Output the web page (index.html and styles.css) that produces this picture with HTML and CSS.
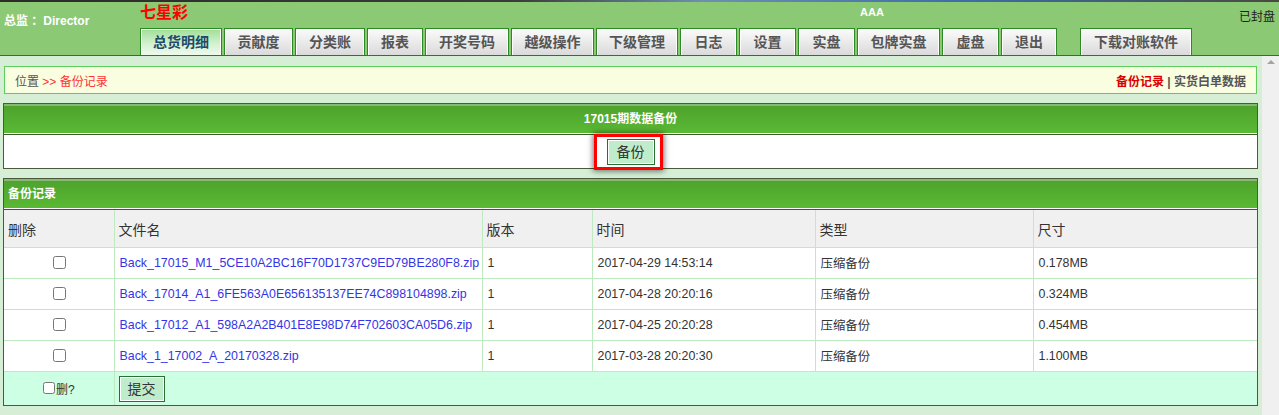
FILE: index.html
```html
<!DOCTYPE html>
<html lang="zh-CN">
<head>
<meta charset="utf-8">
<title>备份记录</title>
<link rel="stylesheet" href="styles.css">
</head>
<body>
<header class="top">
  <div class="strip"></div>
  <div class="top-body">
    <div class="who">总监 ：Director</div>
    <div class="center">
      <div class="title-row">
        <span class="logo">七星彩</span>
        <span class="aaa">AAA</span>
      </div>
      <nav class="tabs">
        <a class="tab active w82">总货明细</a>
        <a class="tab w69">贡献度</a>
        <a class="tab w70">分类账</a>
        <a class="tab w56">报表</a>
        <a class="tab w84">开奖号码</a>
        <a class="tab w83">越级操作</a>
        <a class="tab w82">下级管理</a>
        <a class="tab w57">日志</a>
        <a class="tab w57">设置</a>
        <a class="tab w57">实盘</a>
        <a class="tab w83">包牌实盘</a>
        <a class="tab w57">虚盘</a>
        <a class="tab w56">退出</a>
        <a class="tab w112 dl">下载对账软件</a>
      </nav>
    </div>
    <div class="status">已封盘</div>
  </div>
</header>
<div class="frame">
  <main class="main">
    <div class="crumb">
      <div class="crumb-left">位置 <span class="red">&gt;&gt; 备份记录</span></div>
      <div class="crumb-right"><span class="cur">备份记录</span> | 实货白单数据</div>
    </div>

    <section class="panel">
      <div class="panel-head center-text">17015期数据备份</div>
      <div class="panel-body">
        <span class="btn-wrap">
          <button class="btn">备份</button>
          <span class="mark"></span>
        </span>
      </div>
    </section>

    <section class="panel panel2">
      <div class="panel-head">备份记录</div>
      <table class="grid">
        <colgroup>
          <col style="width:110px"><col style="width:368px"><col style="width:110px"><col style="width:223px"><col style="width:218px"><col>
        </colgroup>
        <thead>
          <tr><th>删除</th><th>文件名</th><th>版本</th><th>时间</th><th>类型</th><th>尺寸</th></tr>
        </thead>
        <tbody>
          <tr><td class="chk"><input type="checkbox"></td><td><a class="file">Back_17015_M1_5CE10A2BC16F70D1737C9ED79BE280F8.zip</a></td><td>1</td><td>2017-04-29 14:53:14</td><td>压缩备份</td><td>0.178MB</td></tr>
          <tr><td class="chk"><input type="checkbox"></td><td><a class="file">Back_17014_A1_6FE563A0E656135137EE74C898104898.zip</a></td><td>1</td><td>2017-04-28 20:20:16</td><td>压缩备份</td><td>0.324MB</td></tr>
          <tr><td class="chk"><input type="checkbox"></td><td><a class="file">Back_17012_A1_598A2A2B401E8E98D74F702603CA05D6.zip</a></td><td>1</td><td>2017-04-25 20:20:28</td><td>压缩备份</td><td>0.454MB</td></tr>
          <tr><td class="chk"><input type="checkbox"></td><td><a class="file">Back_1_17002_A_20170328.zip</a></td><td>1</td><td>2017-03-28 20:20:30</td><td>压缩备份</td><td>1.100MB</td></tr>
        </tbody>
        <tfoot>
          <tr><td class="chk"><label class="del"><input type="checkbox" class="small">删?</label></td><td colspan="5"><button class="btn">提交</button></td></tr>
        </tfoot>
      </table>
    </section>
  </main>
  <div class="scrollbar"><span class="arrow"></span></div>
</div>
</body>
</html>
```
FILE: styles.css
```css
html, body {
  margin: 0;
  padding: 0;
}
body {
  width: 1279px;
  height: 415px;
  overflow: hidden;
  font-family: "Liberation Sans", "Noto Sans CJK SC", sans-serif;
  font-size: 12px;
  color: #333;
  background: #d6eed6;
}

/* ---------- header ---------- */
.top {
  height: 55px;
  background: #8cc974;
  border-bottom: 1px solid #3f6a33;
  display: flex;
  flex-direction: column;
}
.strip {
  height: 2px;
  background: linear-gradient(90deg, #2b2b28 0%, #3a3a36 40%, #6f8fb0 55%, #3d6ea8 75%, #4a4a40 100%);
}
.top-body {
  flex: 1;
  display: flex;
}
.who {
  width: 136px;
  padding: 12px 0 0 4px;
  color: #fff;
  font-weight: bold;
  font-size: 12px;
  line-height: 14px;
}
.center {
  display: flex;
  flex-direction: column;
}
.title-row {
  height: 26px;
  display: flex;
  align-items: flex-start;
}
.logo {
  color: #f00;
  font-weight: bold;
  font-size: 16px;
  line-height: 20px;
  margin-top: 1px;
}
.aaa {
  margin-left: 672px;
  color: #fff;
  font-weight: bold;
  font-size: 11px;
  line-height: 14px;
  margin-top: 3px;
}
.tabs {
  display: flex;
  gap: 2px;
  height: 27px;
}
.tab {
  box-sizing: border-box;
  height: 27px;
  border: 1px solid #2b8a22;
  border-bottom: none;
  box-shadow: inset 1px 1px 0 #fff, inset -1px 0 0 #fff;
  background: linear-gradient(#fbfbfb, #e4e4e4 70%, #dadada);
  color: #555;
  font-weight: bold;
  font-size: 14px;
  line-height: 26px;
  text-align: center;
  cursor: pointer;
}
.tab.active {
  background: linear-gradient(#9fdf97, #d6f2d2 60%, #eef9ee);
  color: #1d4a6b;
}
.tab.dl { margin-left: 21px; }
.w56 { width: 56px; }
.w57 { width: 57px; }
.w69 { width: 69px; }
.w70 { width: 70px; }
.w82 { width: 82px; }
.w83 { width: 83px; }
.w84 { width: 84px; }
.w112 { width: 112px; }
.status {
  margin-left: auto;
  padding: 8px 4px 0 0;
  color: #222;
  font-size: 12px;
  line-height: 14px;
}

/* ---------- frame ---------- */
.frame {
  display: flex;
  height: 359px;
}
.main {
  flex: 1;
  padding: 10px 4px 0 3px;
}
.scrollbar {
  width: 17px;
  background: #f0f0f0;
  display: flex;
  justify-content: center;
  padding-top: 4px;
  box-sizing: border-box;
}
.arrow {
  width: 0;
  height: 0;
  border-left: 4px solid transparent;
  border-right: 4px solid transparent;
  border-bottom: 4px solid #a3a3a3;
}

/* ---------- crumb ---------- */
.crumb {
  margin-left: 1px;
  margin-right: 1px;
  height: 26px;
  border: 1px solid #5ccc5c;
  background: #fafee0;
  display: flex;
  align-items: center;
  justify-content: space-between;
  padding: 0 10px;
  color: #555;
  font-size: 12px;
}
.red { color: #f33; }
.crumb-right { font-weight: bold; color: #555; }
.crumb-right .cur { color: #d00; }

/* ---------- panels ---------- */
.panel {
  margin-top: 9px;
  border: 1px solid #4b5a3c;
  background: #fff;
}
.panel-head {
  height: 29px;
  background: linear-gradient(#86b972 0, #86b972 2px, #4ea32c 2px, #5ab935 100%);
  border-bottom: 1px solid #fff;
  box-shadow: 0 1px 0 #3f5a30;
  margin-bottom: 1px;
  color: #fff;
  font-weight: bold;
  font-size: 12px;
  line-height: 31px;
  padding-left: 4px;
}
.panel-head.center-text {
  text-align: center;
  padding-left: 0;
}
.panel-body {
  height: 33px;
  display: flex;
  justify-content: center;
  align-items: center;
}
.btn-wrap {
  position: relative;
  display: inline-block;
}
.btn {
  height: 26px;
  padding: 0 9px;
  background: #bfeccb;
  border: 1px solid #2a6f32;
  box-shadow: inset 1px 1px 0 #fff, inset -1px -1px 0 #fff;
  color: #333;
  font-family: "Liberation Sans", "Noto Sans CJK SC", sans-serif;
  font-size: 14px;
  line-height: 22px;
  cursor: pointer;
  display: block;
}
.mark {
  position: absolute;
  left: -13px;
  right: -8px;
  top: -5px;
  bottom: -5px;
  border: 3px solid #f00;
  box-shadow: 0 0 6px 1px rgba(0, 0, 0, 0.55);
  pointer-events: none;
}

/* ---------- grid ---------- */
.grid {
  width: 100%;
  border-collapse: collapse;
  border-style: hidden;
  table-layout: fixed;
}
.grid th, .grid td {
  border: 1px solid #bdebbf;
  text-align: left;
  padding: 0 4px;
  white-space: nowrap;
}
.grid th {
  height: 37px;
  background: #f0f0f0;
  font-weight: normal;
  font-size: 14px;
  color: #333;
}
.grid tbody td {
  height: 30px;
  padding-left: 5px;
  font-size: 12.4px;
  color: #333;
}
.grid td.chk { text-align: center; }
.grid input[type=checkbox] {
  margin: 0 0 2px 0;
  vertical-align: middle;
  width: 13px;
  height: 13px;
}
.file {
  color: #3434e6;
  text-decoration: none;
}
.grid tfoot td {
  height: 33px;
  background: #ccffe3;
  font-size: 12px;
}
.del {
  display: inline-flex;
  align-items: center;
}
.grid input.small {
  width: 12px;
  height: 12px;
  margin: 0 1px 0 0;
}
.grid tfoot .btn {
  padding: 0 8px;
}
```
